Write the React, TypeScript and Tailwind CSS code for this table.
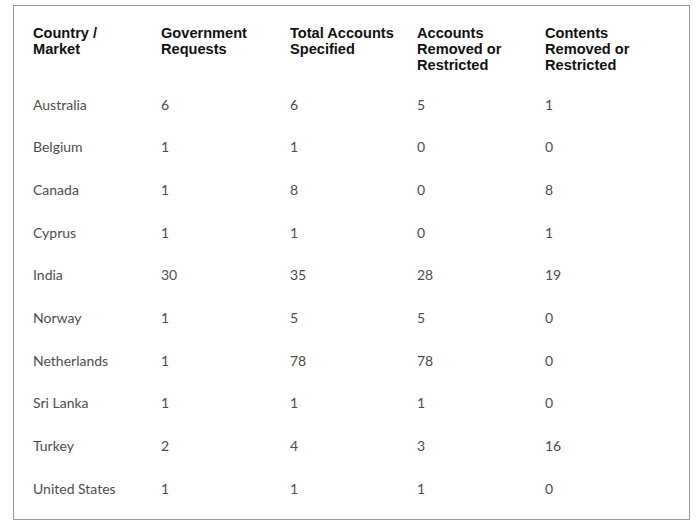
const rows: [string, number, number, number, number][] = [
  ["Australia", 6, 6, 5, 1],
  ["Belgium", 1, 1, 0, 0],
  ["Canada", 1, 8, 0, 8],
  ["Cyprus", 1, 1, 0, 1],
  ["India", 30, 35, 28, 19],
  ["Norway", 1, 5, 5, 0],
  ["Netherlands", 1, 78, 78, 0],
  ["Sri Lanka", 1, 1, 1, 0],
  ["Turkey", 2, 4, 3, 16],
  ["United States", 1, 1, 1, 0],
];

const headers = [
  ["Country /", "Market"],
  ["Government", "Requests"],
  ["Total Accounts", "Specified"],
  ["Accounts", "Removed or", "Restricted"],
  ["Contents", "Removed or", "Restricted"],
];

export default function App() {
  return (
    <div className="w-[700px] h-[529px] bg-white pt-[5px] pl-[13px]">
      <div className="w-[677px] h-[515px] border border-[#9a9a9a] pl-[19px] pt-[19px]">
        {/* header */}
        <div className="grid grid-cols-[128px_129px_127px_128px_1fr] h-[58px] font-['Liberation_Sans',Arial,sans-serif] font-bold text-[14.6px] leading-[16px] text-[#111]">
          {headers.map((h, i) => (
            <div key={i}>
              {h.map((line) => (
                <div key={line}>{line}</div>
              ))}
            </div>
          ))}
        </div>

        {/* body */}
        <div className="font-['Lato',sans-serif] text-[14px] text-[#4d4d4d]">
          {rows.map((r) => (
            <div
              key={r[0]}
              className="grid grid-cols-[128px_129px_127px_128px_1fr] h-[42.67px] items-center"
            >
              {r.map((c, i) => (
                <div key={i}>{c}</div>
              ))}
            </div>
          ))}
        </div>
      </div>
    </div>
  );
}
